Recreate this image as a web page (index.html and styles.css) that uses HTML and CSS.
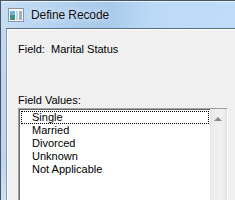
FILE: index.html
```html
<!DOCTYPE html>
<html lang="en">
<head>
    <meta charset="UTF-8">
    <title>Define Recode</title>
    <link rel="stylesheet" href="styles.css">
</head>
<body>
    <div class="window">
        <div class="title-bar">
            <svg class="app-icon" width="16" height="14" viewBox="0 0 16 14">
                <rect x="0.5" y="0.5" width="15" height="13" fill="#f4f6f8" stroke="#8a96a2"/>
                <rect x="2" y="3" width="5" height="9" fill="#3f8f8a"/>
                <rect x="2" y="3" width="5" height="4" fill="#6fb3d8"/>
                <rect x="8" y="3" width="2" height="9" fill="#c9d3dc"/>
                <rect x="11" y="3" width="3" height="9" fill="#9fb0bf"/>
            </svg>
            <span class="title">Define Recode</span>
        </div>
        <div class="client">
            <div class="field-name">Field:&nbsp; Marital Status</div>
            <div class="values-label">Field Values:</div>
            <div class="listbox">
                <ul class="items">
                    <li class="focused">Single</li>
                    <li>Married</li>
                    <li>Divorced</li>
                    <li>Unknown</li>
                    <li>Not Applicable</li>
                </ul>
                <div class="scrollbar">
                    <span class="arrow-up"></span>
                </div>
            </div>
        </div>
    </div>
</body>
</html>
```

FILE: styles.css
```css
body {
    margin: 0;
    width: 235px;
    height: 200px;
    overflow: hidden;
    font-family: "Liberation Sans", Arial, sans-serif;
    font-size: 11px;
    color: #000;
}
.window {
    height: 200px;
    box-sizing: border-box;
    border-left: 1px solid #4a5360;
    border-top: 1px solid #4a5360;
    background: linear-gradient(180deg, #c2dbf3 0%, #bcd6f0 80%, #cfe2f5 100%);
    display: flex;
    flex-direction: column;
    overflow: hidden;
}
.title-bar {
    height: 27px;
    flex: none;
    display: flex;
    align-items: center;
    padding-left: 7px;
    box-shadow: inset 0 1px 0 #e8f2fc;
    background: linear-gradient(100deg, #c6def5 0%, #b0d0ee 30%, #a8c9ea 45%, #bcdaf7 65%, #bfdcf9 100%);
}
.app-icon {
    margin-right: 7px;
    margin-top: 1px;
}
.title {
    font-size: 12px;
    letter-spacing: -0.1px;
    color: #111;
    text-shadow: 0 0 6px rgba(255, 255, 255, 0.9);
}
.client {
    flex: 1;
    min-height: 0;
    overflow: hidden;
    margin-left: 5px;
    border-top: 1px solid #5e6b78;
    border-left: 1px solid #8a9aab;
    background: #f0f0f0;
    padding: 13px 0 0 11px;
    box-shadow: inset 1px 1px 0 #fff;
}
.field-name {
    color: #000;
    height: 14px;
    line-height: 14px;
}
.values-label {
    margin-top: 38px;
    height: 13px;
    line-height: 13px;
}
.listbox {
    margin-top: 1px;
    width: 210px;
    height: 94px;
    box-sizing: border-box;
    border-top: 1px solid #a0a0a0;
    border-left: 1px solid #a0a0a0;
    border-right: 1px solid #ffffff;
    box-shadow: inset 1px 1px 0 #696969;
    background: #fff;
    display: flex;
    padding: 1px 0 0 1px;
}
.items {
    list-style: none;
    margin: 0;
    padding: 1px 0 0 1px;
    flex: 1;
}
.items li {
    height: 13px;
    line-height: 13px;
    padding-left: 11px;
    box-sizing: border-box;
}
.items li.focused {
    outline: 1px dotted #000;
    outline-offset: -1px;
    margin-right: 1px;
}
.scrollbar {
    width: 16px;
    flex: none;
    margin-top: -1px;
    background: linear-gradient(90deg, #e3e3e3 0, #ececec 2px, #f0f0f0 12px, #e6e6e6 16px);
    border-right: 1px solid #e3e3e3;
    display: flex;
    justify-content: center;
}
.arrow-up {
    margin-top: 8px;
    width: 0;
    height: 0;
    border-left: 4px solid transparent;
    border-right: 4px solid transparent;
    border-bottom: 4px solid #8a8a8a;
}
```
